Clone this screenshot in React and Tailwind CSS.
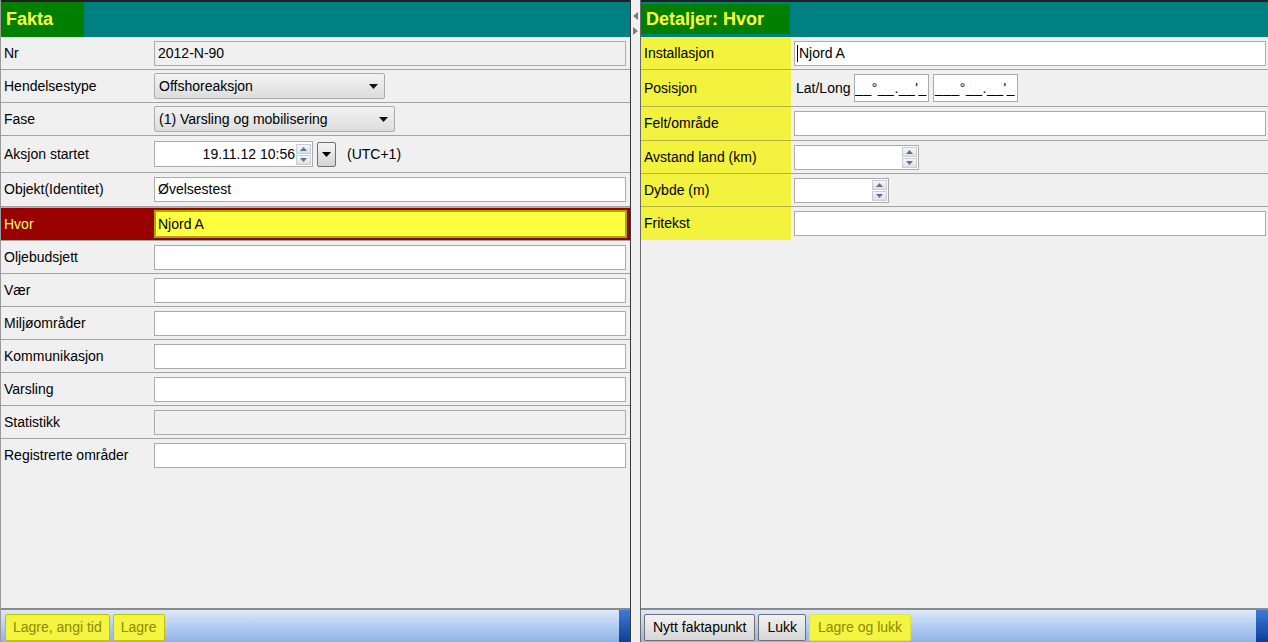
import React from "react";

const font = { fontFamily: '"Liberation Sans", Arial, sans-serif' };

function Spinner({ h = "h-[24px]" }) {
  return (
    <div className={`flex flex-col justify-center gap-[1px] pr-[1px] ${h}`}>
      <div className="flex h-[10px] w-[15px] items-center justify-center border border-[#c8ccd4] bg-gradient-to-b from-[#f6f6f6] to-[#e0e0e0]">
        <svg width="7" height="4" viewBox="0 0 7 4"><path d="M3.5 0L7 4H0Z" fill="#5b6fa8" /></svg>
      </div>
      <div className="flex h-[10px] w-[15px] items-center justify-center border border-[#c8ccd4] bg-gradient-to-b from-[#f6f6f6] to-[#e0e0e0]">
        <svg width="7" height="4" viewBox="0 0 7 4"><path d="M0 0H7L3.5 4Z" fill="#5b6fa8" /></svg>
      </div>
    </div>
  );
}

function Select({ text, w }) {
  return (
    <div className={`flex h-[26px] items-center justify-between rounded-[2px] border border-[#acacac] bg-gradient-to-b from-[#f3f3f3] to-[#dddddd] pl-[4px] pr-[6px] ${w}`}>
      <span className="text-[14px] text-black">{text}</span>
      <svg width="9" height="5" viewBox="0 0 9 5"><path d="M0 0H9L4.5 5Z" fill="#111" /></svg>
    </div>
  );
}

function TextInput({ value = "", disabled = false, w = "w-[472px]" }) {
  return (
    <div className={`flex h-[25px] items-center border border-[#ababab] pl-[3px] text-[14px] text-black ${disabled ? "bg-[#f0f0f0]" : "bg-white"} ${w}`}>
      {value}
    </div>
  );
}

function LeftRow({ label, h, children, hi = false }) {
  return (
    <div className={`flex shrink-0 items-center border-b border-[#a3a3a3] ${h} ${hi ? "bg-[#990000] border-t border-t-[#c8c800]" : ""}`}>
      <div className={`w-[153px] shrink-0 pl-[3px] text-[14px] ${hi ? "text-[#ffff70]" : "text-black"}`}>{label}</div>
      <div className="flex items-center">{children}</div>
    </div>
  );
}

function RightRow({ label, h, children }) {
  return (
    <div className={`flex shrink-0 ${h}`}>
      <div className="flex w-[150px] shrink-0 items-center border-b border-[#b5b53a] bg-[#f2f23f] pl-[3px] text-[14px] text-black">{label}</div>
      <div className="flex flex-1 items-center border-b border-[#a3a3a3] pl-[3px]">{children}</div>
    </div>
  );
}

export default function App() {
  return (
    <div style={font} className="flex h-[642px] w-[1268px] overflow-hidden bg-[#f0f0f0]">
      {/* Left panel */}
      <div className="flex w-[631px] shrink-0 flex-col border-l border-r border-l-[#9a9a9a] border-r-[#3a3a3a]">
        <div className="flex h-[37px] shrink-0 border-t-2 border-t-[#202020] bg-[#008080]">
          <div className="flex w-[83px] items-center bg-[#007f00] pl-[5px] text-[18px] font-bold text-[#ffff40]">Fakta</div>
        </div>
        <LeftRow label="Nr" h="h-[33px]"><TextInput value="2012-N-90" disabled /></LeftRow>
        <LeftRow label="Hendelsestype" h="h-[33px]"><Select text="Offshoreaksjon" w="w-[231px]" /></LeftRow>
        <LeftRow label="Fase" h="h-[33px]"><Select text="(1) Varsling og mobilisering" w="w-[241px]" /></LeftRow>
        <LeftRow label="Aksjon startet" h="h-[37px]">
          <div className="flex h-[26px] w-[159px] items-center justify-end border border-[#ababab] bg-white">
            <span className="pr-[1px] text-[14px] text-black">19.11.12 10:56</span>
            <Spinner />
          </div>
          <div className="ml-[4px] flex h-[25px] w-[19px] items-center justify-center rounded-[2px] border border-[#707070] bg-gradient-to-b from-[#f4f4f4] to-[#d4d4d4]">
            <svg width="9" height="5" viewBox="0 0 9 5"><path d="M0 0H9L4.5 5Z" fill="#000" /></svg>
          </div>
          <span className="ml-[11px] text-[14px] text-black">(UTC+1)</span>
        </LeftRow>
        <LeftRow label="Objekt(Identitet)" h="h-[34px]"><TextInput value="Øvelsestest" /></LeftRow>
        <LeftRow label="Hvor" h="h-[34px]" hi>
          <div className="flex h-[28px] w-[473px] items-center border-2 border-[#a8a800] bg-[#ffff40] pl-[2px] text-[14px] text-black">Njord A</div>
        </LeftRow>
        <LeftRow label="Oljebudsjett" h="h-[33px]"><TextInput /></LeftRow>
        <LeftRow label="Vær" h="h-[33px]"><TextInput /></LeftRow>
        <LeftRow label="Miljøområder" h="h-[33px]"><TextInput /></LeftRow>
        <LeftRow label="Kommunikasjon" h="h-[33px]"><TextInput /></LeftRow>
        <LeftRow label="Varsling" h="h-[33px]"><TextInput /></LeftRow>
        <LeftRow label="Statistikk" h="h-[33px]"><TextInput disabled /></LeftRow>
        <div className="flex h-[33px] shrink-0 items-center">
          <div className="w-[153px] shrink-0 pl-[3px] text-[14px] text-black">Registrerte områder</div>
          <TextInput />
        </div>
        <div className="flex-1" />
        <div className="flex h-[34px] shrink-0 border-t-2 border-t-[#8a8a8a]">
          <div className="flex flex-1 items-end gap-[3px] bg-gradient-to-b from-[#dce9fa] to-[#8fb2e8] pb-[1px] pl-[4px]">
            <button className="h-[27px] rounded-[2px] border border-[#c2c200] bg-[#f4f442] px-[7px] text-[14px] text-[#8a8a00]">Lagre, angi tid</button>
            <button className="h-[27px] rounded-[2px] border border-[#c2c200] bg-[#f4f442] px-[7px] text-[14px] text-[#8a8a00]">Lagre</button>
          </div>
          <div className="w-[11px] bg-gradient-to-b from-[#3f7ad8] to-[#0b3f9a]" />
        </div>
      </div>

      {/* Divider */}
      <div className="flex w-[9px] shrink-0 flex-col items-center pt-[12px]">
        <svg width="5" height="8" viewBox="0 0 5 8"><path d="M5 0V8L0 4Z" fill="#7a7a7a" /></svg>
        <div className="h-[7px]" />
        <svg width="5" height="8" viewBox="0 0 5 8"><path d="M0 0V8L5 4Z" fill="#7a7a7a" /></svg>
      </div>

      {/* Right panel */}
      <div className="flex flex-1 flex-col border-l border-l-[#6a6a6a]">
        <div className="flex h-[37px] shrink-0 border-t-2 border-t-[#202020] bg-[#008080] pt-[2px] pb-[3px]">
          <div className="flex w-[149px] items-center bg-[#007f00] pl-[5px] text-[18px] font-bold text-[#ffff40]">Detaljer: Hvor</div>
        </div>
        <RightRow label="Installasjon" h="h-[33px]">
          <div className="flex h-[25px] w-[472px] items-center border border-[#ababab] bg-white pl-[2px] text-[14px] text-black">
            <span className="mr-[1px] inline-block h-[17px] w-[1px] bg-black" />Njord A
          </div>
        </RightRow>
        <RightRow label="Posisjon" h="h-[37px]">
          <span className="ml-[2px] text-[14px] text-black">Lat/Long</span>
          <div className="ml-[3px] flex h-[28px] w-[75px] items-center justify-center border border-[#ababab] bg-white text-[14px] tracking-[0.5px] text-black">__°__.__'_</div>
          <div className="ml-[4px] flex h-[28px] w-[85px] items-center justify-center border border-[#ababab] bg-white text-[14px] tracking-[0.5px] text-black">___°__.__'_</div>
        </RightRow>
        <RightRow label="Felt/område" h="h-[34px]"><TextInput /></RightRow>
        <RightRow label="Avstand land (km)" h="h-[33px]">
          <div className="flex h-[25px] w-[125px] items-center justify-end border border-[#ababab] bg-white"><Spinner h="h-[23px]" /></div>
        </RightRow>
        <RightRow label="Dybde (m)" h="h-[33px]">
          <div className="flex h-[25px] w-[95px] items-center justify-end border border-[#ababab] bg-white"><Spinner h="h-[23px]" /></div>
        </RightRow>
        <div className="flex h-[33px] shrink-0">
          <div className="flex w-[150px] shrink-0 items-center bg-[#f2f23f] pl-[3px] text-[14px] text-black">Fritekst</div>
          <div className="flex flex-1 items-center pl-[3px]"><TextInput /></div>
        </div>
        <div className="flex-1" />
        <div className="flex h-[34px] shrink-0 border-t-2 border-t-[#8a8a8a]">
          <div className="flex flex-1 items-end gap-[3px] bg-gradient-to-b from-[#dce9fa] to-[#8fb2e8] pb-[1px] pl-[3px]">
            <button className="h-[27px] rounded-[2px] border border-[#707070] bg-gradient-to-b from-[#f2f2f2] to-[#d6d6d6] px-[8px] text-[14px] text-black">Nytt faktapunkt</button>
            <button className="h-[27px] rounded-[2px] border border-[#707070] bg-gradient-to-b from-[#f2f2f2] to-[#d6d6d6] px-[8px] text-[14px] text-black">Lukk</button>
            <button className="h-[27px] rounded-[2px] border border-[#e0e040] bg-[#f4f442] px-[8px] text-[14px] text-[#8a8a00]">Lagre og lukk</button>
          </div>
          <div className="w-[12px] bg-gradient-to-b from-[#3f7ad8] to-[#0b3f9a]" />
        </div>
      </div>
    </div>
  );
}
